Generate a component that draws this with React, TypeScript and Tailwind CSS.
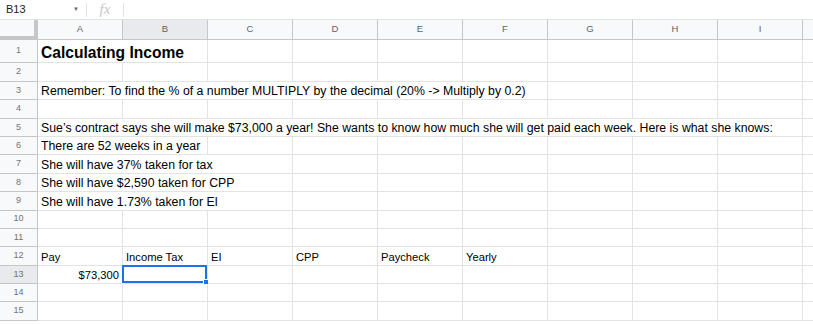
import React from "react";

type Cell = {
  span?: number;
  text?: string;
  bold?: boolean;
  small?: boolean;
  right?: boolean;
  selected?: boolean;
};

type Row = { n: number; tall?: boolean; cells: Cell[] };

const COLS = ["A", "B", "C", "D", "E", "F", "G", "H", "I", ""];

const rows: Row[] = [
  { n: 1, tall: true, cells: [{ span: 2, text: "Calculating Income", bold: true }] },
  { n: 2, cells: [] },
  {
    n: 3,
    cells: [
      {
        span: 6,
        text: "Remember: To find the % of a number MULTIPLY by the decimal (20% -> Multiply by 0.2)",
      },
    ],
  },
  { n: 4, cells: [] },
  {
    n: 5,
    cells: [
      {
        span: 9,
        text: "Sue\u2019s contract says she will make $73,000 a year! She wants to know how much she will get paid each week. Here is what she knows:",
      },
    ],
  },
  { n: 6, cells: [{ span: 2, text: "There are 52 weeks in a year" }] },
  { n: 7, cells: [{ span: 3, text: "She will have 37% taken for tax" }] },
  { n: 8, cells: [{ span: 3, text: "She will have $2,590 taken for CPP" }] },
  { n: 9, cells: [{ span: 3, text: "She will have 1.73% taken for EI" }] },
  { n: 10, cells: [] },
  { n: 11, cells: [] },
  {
    n: 12,
    cells: [
      { text: "Pay", small: true },
      { text: "Income Tax", small: true },
      { text: "EI", small: true },
      { text: "CPP", small: true },
      { text: "Paycheck", small: true },
      { text: "Yearly", small: true },
    ],
  },
  { n: 13, cells: [{ text: "$73,300", small: true, right: true }, { selected: true }] },
  { n: 14, cells: [] },
  { n: 15, cells: [] },
];

// pad each row out to the full column count
function fillRow(cells: Cell[]): Cell[] {
  const used = cells.reduce((s, c) => s + (c.span ?? 1), 0);
  const out = [...cells];
  for (let i = used; i < COLS.length; i++) out.push({});
  return out;
}

const spanWidth: Record<number, string> = {
  1: "w-[85px]",
  2: "w-[170px]",
  3: "w-[255px]",
  6: "w-[510px]",
  9: "w-[765px]",
};

function textClass(cell: Cell) {
  if (cell.bold) return "pb-0 text-[15.6px] font-bold leading-[18px]";
  if (cell.small) return "pb-[1px] text-[11.2px] leading-[13px]";
  return "pb-[1px] text-[12.3px] leading-[14px]";
}

function FormulaBar() {
  return (
    <div className="flex h-[20px] items-center border-b border-[#e1e3e1] text-[#202124]">
      <div className="flex w-[86px] items-center justify-between pl-[6px] pr-[7px] text-[11px]">
        <span>B13</span>
        <span className="text-[6px] text-[#5f6368]">▼</span>
      </div>
      <div className="h-[14px] w-px bg-[#e1e3e1]" />
      <div className="flex w-[36px] items-center justify-center font-['Liberation_Serif',serif] text-[15px] italic text-[#c4c7c5]">
        fx
      </div>
      <div className="h-[14px] w-px bg-[#e1e3e1]" />
    </div>
  );
}

function ColumnHeader() {
  return (
    <div className="flex h-[20px] bg-[#f8f9fa] text-[9.5px] text-[#5f6368]">
      <div className="w-[38px] shrink-0 border-b-[4px] border-r-[4px] border-[#c4c7c5]" />
      {COLS.map((c, i) => (
        <div
          key={i}
          className={`flex w-[85px] shrink-0 items-center justify-center border-b border-r border-[#c4c7c5] ${
            c === "B" ? "bg-[#e8eaed]" : ""
          }`}
        >
          {c}
        </div>
      ))}
    </div>
  );
}

function GridRow({ row }: { row: Row }) {
  const h = row.tall ? "h-[23.4px]" : "h-[18.4px]";
  return (
    <div className={`flex ${h}`}>
      <div
        className={`flex w-[38px] shrink-0 items-center justify-center border-b border-r border-[#c4c7c5] text-[9px] text-[#6f7378] ${
          row.n === 13 ? "bg-[#e8eaed]" : "bg-[#f8f9fa]"
        }`}
      >
        {row.n}
      </div>
      {fillRow(row.cells).map((cell, i) => (
        <div
          key={i}
          className={`relative flex shrink-0 items-end whitespace-nowrap border-b border-r border-[#e2e3e3] px-[3px] text-black ${
            spanWidth[cell.span ?? 1]
          } ${cell.right ? "justify-end" : ""} ${textClass(cell)}`}
        >
          {cell.text}
          {cell.selected && (
            <div className="absolute -left-px -top-px bottom-0 right-0 border-2 border-[#1a73e8]">
              <div className="absolute -bottom-[4px] -right-[4px] h-[6px] w-[6px] border border-white bg-[#1a73e8]" />
            </div>
          )}
        </div>
      ))}
    </div>
  );
}

export default function App() {
  return (
    <div className="h-[325px] w-[813px] overflow-hidden bg-white font-['Liberation_Sans',Arial,sans-serif]">
      <FormulaBar />
      <ColumnHeader />
      {rows.map((r) => (
        <GridRow key={r.n} row={r} />
      ))}
    </div>
  );
}
